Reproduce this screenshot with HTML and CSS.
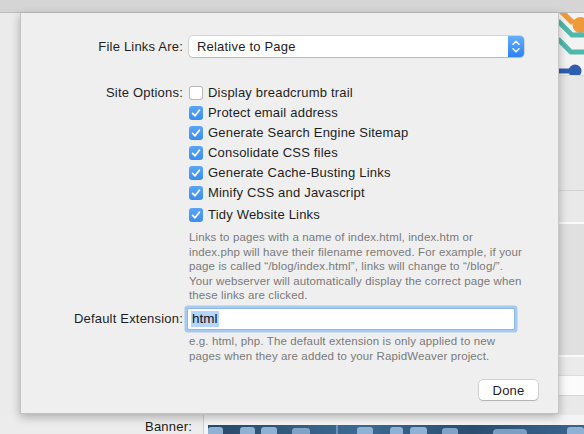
FILE: index.html
```html
<!DOCTYPE html>
<html>
<head>
<meta charset="utf-8">
<link rel="stylesheet" href="styles.css">
</head>
<body>
<div class="screen">
  <div class="topbar"></div>
  <div class="middle">
    <div class="gutter"></div>
    <div class="sheet">
      <div class="form">
        <div class="lbl lbl-links">File Links Are:</div>
        <div class="select">
          <span class="select-text">Relative to Page</span>
          <span class="stepper">
            <svg width="16" height="21" viewBox="0 0 16 21"><path d="M5 8.2 L8 5.2 L11 8.2" fill="none" stroke="#fff" stroke-width="1.5" stroke-linecap="round" stroke-linejoin="round"/><path d="M5 12.8 L8 15.8 L11 12.8" fill="none" stroke="#fff" stroke-width="1.5" stroke-linecap="round" stroke-linejoin="round"/></svg>
          </span>
        </div>

        <div class="lbl lbl-opts">Site Options:</div>
        <div class="checks">
          <div class="check"><span class="box off"></span><span>Display breadcrumb trail</span></div>
          <div class="check"><span class="box on"><svg width="14" height="14" viewBox="0 0 14 14"><path d="M3.6 7.3 L6 9.8 L10.4 4.2" fill="none" stroke="#fff" stroke-width="1.7" stroke-linecap="round" stroke-linejoin="round"/></svg></span><span>Protect email address</span></div>
          <div class="check"><span class="box on"><svg width="14" height="14" viewBox="0 0 14 14"><path d="M3.6 7.3 L6 9.8 L10.4 4.2" fill="none" stroke="#fff" stroke-width="1.7" stroke-linecap="round" stroke-linejoin="round"/></svg></span><span>Generate Search Engine Sitemap</span></div>
          <div class="check"><span class="box on"><svg width="14" height="14" viewBox="0 0 14 14"><path d="M3.6 7.3 L6 9.8 L10.4 4.2" fill="none" stroke="#fff" stroke-width="1.7" stroke-linecap="round" stroke-linejoin="round"/></svg></span><span>Consolidate CSS files</span></div>
          <div class="check"><span class="box on"><svg width="14" height="14" viewBox="0 0 14 14"><path d="M3.6 7.3 L6 9.8 L10.4 4.2" fill="none" stroke="#fff" stroke-width="1.7" stroke-linecap="round" stroke-linejoin="round"/></svg></span><span>Generate Cache-Busting Links</span></div>
          <div class="check"><span class="box on"><svg width="14" height="14" viewBox="0 0 14 14"><path d="M3.6 7.3 L6 9.8 L10.4 4.2" fill="none" stroke="#fff" stroke-width="1.7" stroke-linecap="round" stroke-linejoin="round"/></svg></span><span>Minify CSS and Javascript</span></div>
          <div class="check tidy"><span class="box on"><svg width="14" height="14" viewBox="0 0 14 14"><path d="M3.6 7.3 L6 9.8 L10.4 4.2" fill="none" stroke="#fff" stroke-width="1.7" stroke-linecap="round" stroke-linejoin="round"/></svg></span><span>Tidy Website Links</span></div>
        </div>

        <p class="help help-links">Links to pages with a name of index.html, index.htm or<br>index.php will have their filename removed. For example, if your<br>page is called “/blog/index.html”, links will change to “/blog/”.<br>Your webserver will automatically display the correct page when<br>these links are clicked.</p>

        <div class="lbl lbl-ext">Default Extension:</div>
        <div class="field"><span class="selected">html</span></div>

        <p class="help help-ext">e.g. html, php. The default extension is only applied to new<br>pages when they are added to your RapidWeaver project.</p>
      </div>
      <div class="actions"><button class="btn">Done</button></div>
    </div>
    <div class="side">
      <div class="art">
        <svg width="25" height="62" viewBox="0 0 25 62">
          <path d="M1 -3 L14 10" stroke="#ef9a3a" stroke-width="5.5" fill="none"/>
          <circle cx="21.5" cy="12" r="8" fill="#ef9a3a"/>
          <path d="M-1 8 L13 22 L26 22" stroke="#4fb8aa" stroke-width="5" fill="none"/>
          <path d="M-1 26 L12 39 L26 39" stroke="#4fb8aa" stroke-width="5" fill="none"/>
          <path d="M0 58 L12 58" stroke="#2e5fae" stroke-width="5" fill="none"/>
          <circle cx="16" cy="58" r="6.5" fill="#2e5fae"/>
        </svg>
      </div>
      <div class="pane p1"></div>
      <div class="pane p2"></div>
      <div class="pane p3"></div>
      <div class="pane p4"></div>
      <div class="pane p5"></div>
      <div class="pane p6"></div>
    </div>
  </div>
  <div class="footer">
    <div class="banner-label">Banner:</div>
    <div class="banner-box">
      <div class="banner-img">
        <svg width="376" height="12" viewBox="0 0 376 12">
          <rect x="0" y="2" width="15" height="12" rx="3" fill="#8fb1d4"/>
          <rect x="32" y="2" width="15" height="12" rx="3" fill="#8fb1d4"/>
          <rect x="53" y="2" width="16" height="12" rx="3" fill="#8fb1d4"/>
          <rect x="84" y="3" width="18" height="12" rx="3" fill="#7fa2c6"/>
          <rect x="128" y="0" width="2" height="12" fill="#6f93b8"/>
          <rect x="149" y="2" width="16" height="12" rx="3" fill="#8fb1d4"/>
          <rect x="182" y="2" width="13" height="12" rx="3" fill="#8fb1d4"/>
          <rect x="202" y="2" width="17" height="12" rx="3" fill="#8fb1d4"/>
          <rect x="234" y="3" width="16" height="12" rx="3" fill="#7fa2c6"/>
          <rect x="285" y="4" width="34" height="12" rx="4" fill="#7b9ec3"/>
          <rect x="359" y="2" width="17" height="12" rx="3" fill="#8fb1d4"/>
        </svg>
      </div>
    </div>
  </div>
</div>
</body>
</html>
```

FILE: styles.css
```css
* { box-sizing: border-box; }
html, body {
  margin: 0;
  padding: 0;
}
body {
  width: 584px;
  height: 434px;
  overflow: hidden;
  background: #ebebeb;
  font-family: "Liberation Sans", Arial, sans-serif;
  font-size: 13px;
  color: #222;
}
.screen {
  display: flex;
  flex-direction: column;
  height: 434px;
}
.topbar {
  height: 13px;
  background: #d6d5d6;
  border-bottom: 1px solid #bdbcbd;
  flex: none;
}
.middle {
  display: flex;
  height: 402px;
  flex: none;
}
.gutter {
  width: 20px;
  background: #ebebeb;
  flex: none;
}
.sheet {
  position: relative;
  z-index: 2;
  width: 539px;
  height: 401px;
  flex: none;
  background: #efefef;
  border-left: 1px solid #c4c4c4;
  border-right: 1px solid #c8c8c8;
  border-bottom: 1px solid #c2c2c2;
  box-shadow: 0 3px 9px rgba(0, 0, 0, 0.28);
  display: flex;
  flex-direction: column;
  padding-top: 23px;
}
.form {
  display: grid;
  grid-template-columns: 162px 336px;
  column-gap: 6px;
  align-items: start;
}
.lbl {
  text-align: right;
  color: #1e1e1e;
  letter-spacing: 0.2px;
  white-space: nowrap;
}
.lbl-links { line-height: 21px; }
.select {
  height: 21px;
  width: 335px;
  background: #fff;
  border-radius: 4px;
  box-shadow: 0 0 0 0.5px rgba(0, 0, 0, 0.22), 0 1px 1px rgba(0, 0, 0, 0.12);
  display: flex;
  align-items: center;
  justify-content: space-between;
  overflow: hidden;
}
.select-text {
  padding-left: 8px;
  letter-spacing: 0.2px;
  color: #1e1e1e;
}
.stepper {
  width: 16px;
  height: 21px;
  background: linear-gradient(#64adf9, #2c83f5);
  display: flex;
}
.lbl-opts {
  margin-top: 25.5px;
  line-height: 20px;
}
.checks {
  margin-top: 25.5px;
  display: flex;
  flex-direction: column;
}
.check {
  height: 20px;
  display: flex;
  align-items: center;
  gap: 5px;
  letter-spacing: 0.2px;
  color: #1e1e1e;
  white-space: nowrap;
}
.check.tidy { margin-top: 2px; }
.box {
  width: 14px;
  height: 14px;
  border-radius: 3px;
  flex: none;
  display: flex;
}
.box.off {
  background: #fff;
  box-shadow: inset 0 0 0 1px #b8b8b8;
}
.box.on {
  background: linear-gradient(#5aa5f6, #3a8ef1);
}
.help {
  grid-column: 2;
  margin: 5.5px 0 0 0;
  font-size: 11.5px;
  letter-spacing: 0.12px;
  line-height: 14.6px;
  color: #7a7a7a;
  white-space: nowrap;
}
.lbl-ext {
  margin-top: 6px;
  line-height: 20px;
}
.field {
  margin-top: 6px;
  margin-left: -1px;
  width: 326px;
  height: 20px;
  background: #fff;
  box-shadow: 0 0 0 1px #8fb8ea, 0 0 0 3.5px #a9caf0;
  border-radius: 1px;
  padding-left: 3px;
  display: flex;
  align-items: center;
}
.selected {
  background: #b5d5fd;
  padding: 0 1px;
  line-height: 16px;
  font-size: 13.5px;
  color: #111;
}
.help-ext { margin-top: 5px; }
.actions {
  margin-top: auto;
  display: flex;
  justify-content: flex-end;
  padding: 0 20px 13px 0;
}
.btn {
  width: 59px;
  height: 20px;
  background: #fff;
  border: none;
  border-radius: 4px;
  box-shadow: 0 0 0 0.5px rgba(0, 0, 0, 0.25), 0 1px 1px rgba(0, 0, 0, 0.15);
  font-family: "Liberation Sans", Arial, sans-serif;
  font-size: 13px;
  letter-spacing: 0.2px;
  color: #1e1e1e;
  padding: 0;
}
.side {
  flex: 1;
  display: flex;
  flex-direction: column;
  background: #e6e6e6;
}
.art {
  height: 62px;
  background: #f3f3f3;
  overflow: hidden;
  flex: none;
  display: flex;
}
.pane { flex: none; }
.p1 { height: 115px; background: #e7e7e7; border-top: 1px solid #d9d9d9; }
.p2 { height: 32px; background: #e9e9e9; border-top: 1px solid #d3d3d3; }
.p3 { height: 133px; background: #e0e0e0; border-top: 2px solid #fafafa; }
.p4 { height: 20px; background: #ebebeb; border-top: 2px solid #fafafa; }
.p5 { height: 20px; background: #fbfbfb; border-top: 1px solid #dcdcdc; }
.p6 { flex: 1; background: #e9e9e9; border-top: 1px solid #d6d6d6; }
.footer {
  flex: 1;
  display: flex;
  background: #ececec;
}
.banner-label {
  width: 192px;
  text-align: right;
  padding-top: 4px;
  font-size: 13px;
  letter-spacing: 0.2px;
  color: #1a1a1a;
}
.banner-box {
  flex: 1;
  margin-left: 11px;
  border-left: 1px solid #cfcfcf;
  background: #f4f4f4;
  padding: 10px 0 0 4px;
  overflow: hidden;
}
.banner-img {
  height: 12px;
  background: linear-gradient(90deg, #274867, #3c6a94 40%, #2a4d70 70%, #3a658f);
  display: flex;
}
```
